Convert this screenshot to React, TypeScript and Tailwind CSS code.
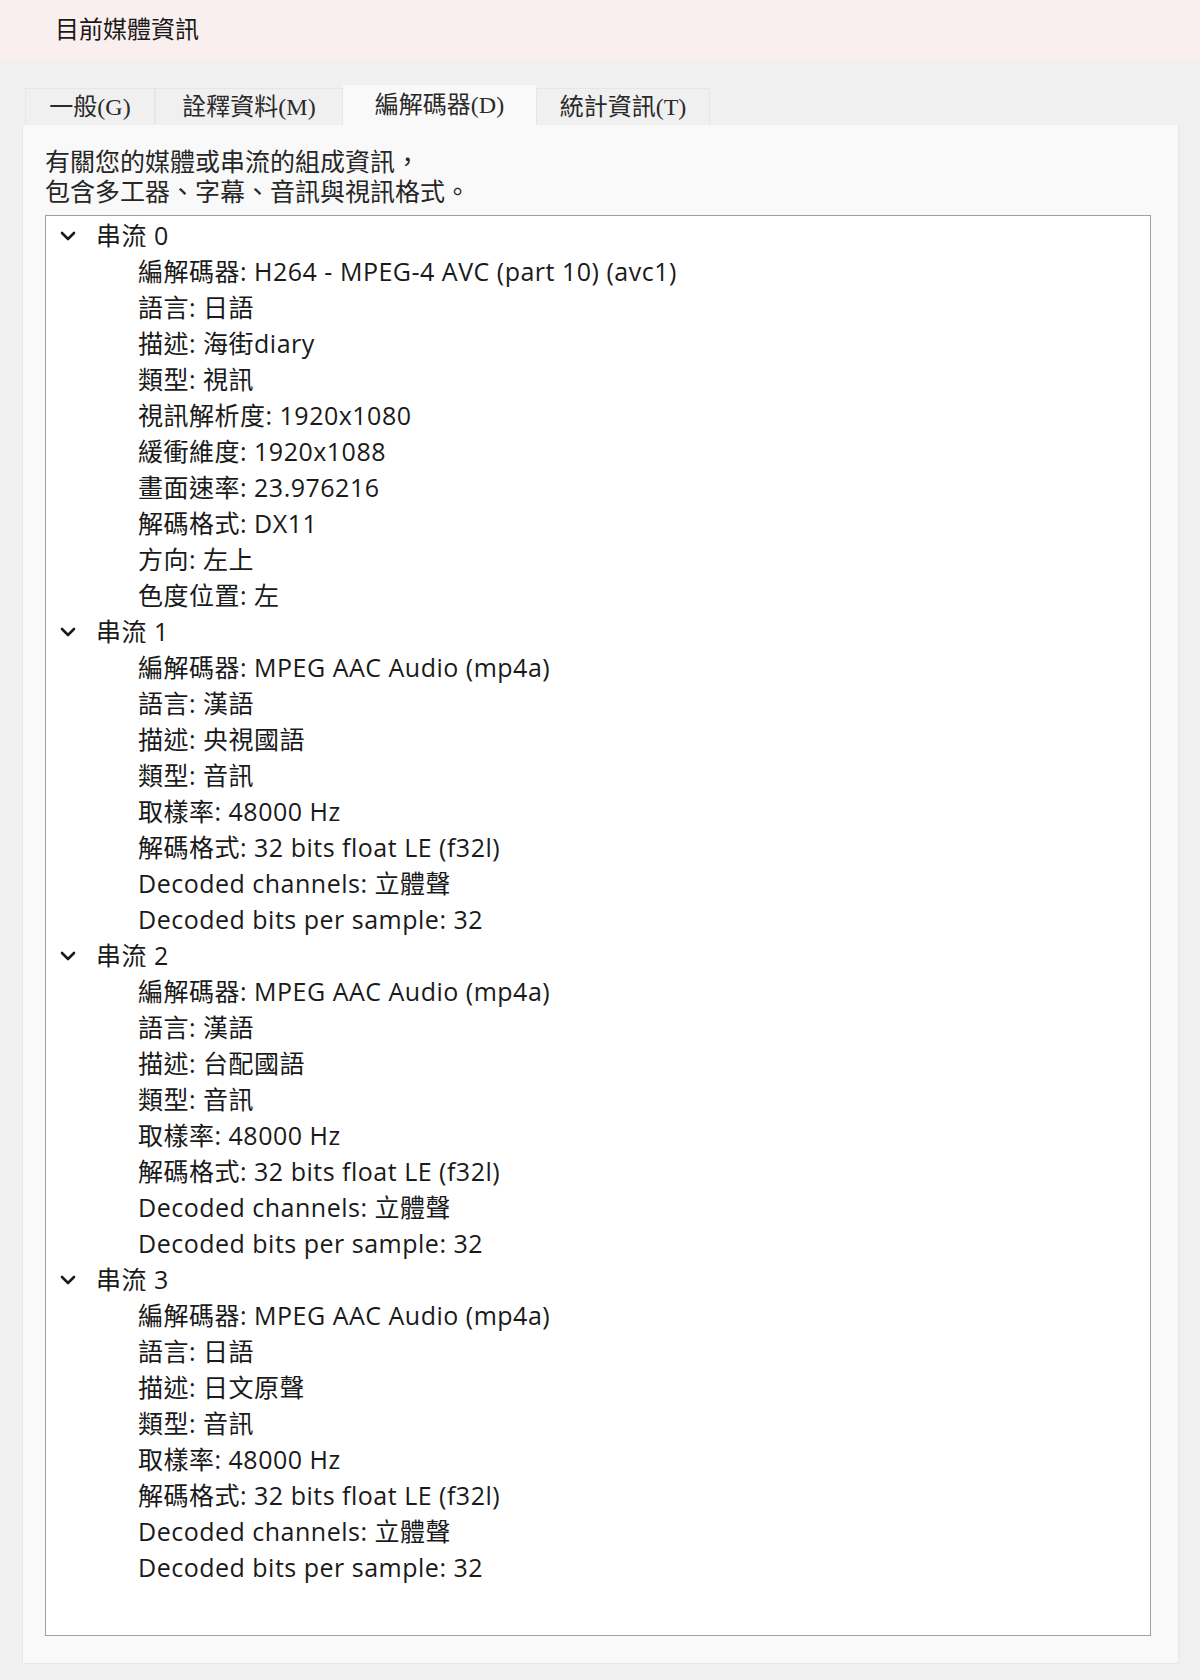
import React from "react";

interface Stream {
  name: string;
  items: string[];
}

const streams: Stream[] = [
  {
    name: "串流 0",
    items: [
      "編解碼器: H264 - MPEG-4 AVC (part 10) (avc1)",
      "語言: 日語",
      "描述: 海街diary",
      "類型: 視訊",
      "視訊解析度: 1920x1080",
      "緩衝維度: 1920x1088",
      "畫面速率: 23.976216",
      "解碼格式: DX11",
      "方向: 左上",
      "色度位置: 左",
    ],
  },
  {
    name: "串流 1",
    items: [
      "編解碼器: MPEG AAC Audio (mp4a)",
      "語言: 漢語",
      "描述: 央視國語",
      "類型: 音訊",
      "取樣率: 48000 Hz",
      "解碼格式: 32 bits float LE (f32l)",
      "Decoded channels: 立體聲",
      "Decoded bits per sample: 32",
    ],
  },
  {
    name: "串流 2",
    items: [
      "編解碼器: MPEG AAC Audio (mp4a)",
      "語言: 漢語",
      "描述: 台配國語",
      "類型: 音訊",
      "取樣率: 48000 Hz",
      "解碼格式: 32 bits float LE (f32l)",
      "Decoded channels: 立體聲",
      "Decoded bits per sample: 32",
    ],
  },
  {
    name: "串流 3",
    items: [
      "編解碼器: MPEG AAC Audio (mp4a)",
      "語言: 日語",
      "描述: 日文原聲",
      "類型: 音訊",
      "取樣率: 48000 Hz",
      "解碼格式: 32 bits float LE (f32l)",
      "Decoded channels: 立體聲",
      "Decoded bits per sample: 32",
    ],
  },
];

const tabs = [
  { label: "一般(G)", width: "w-[130px]" },
  { label: "詮釋資料(M)", width: "w-[188px]" },
  { label: "編解碼器(D)", width: "w-[193px]", active: true },
  { label: "統計資訊(T)", width: "w-[174px]" },
];

function Chevron() {
  return (
    <svg width="16" height="10" viewBox="0 0 16 10" className="ml-[14px]">
      <polyline
        points="2,2 8,8 14,2"
        fill="none"
        stroke="#1a1a1a"
        strokeWidth="2.6"
        strokeLinecap="round"
        strokeLinejoin="round"
      />
    </svg>
  );
}

export default function App() {
  return (
    <div className="min-h-[1680px] bg-[#f0f0f0] font-['Open_Sans','Noto_Sans_CJK_TC',sans-serif] text-[#1a1a1a]">
      {/* Title band */}
      <div className="flex h-[61px] items-center bg-[#faefef] pb-[4px] pl-[55px] text-[24px]">
        目前媒體資訊
      </div>

      {/* Tabs */}
      <div className="mt-[24px] flex items-end pl-[25px] font-['Liberation_Serif','Noto_Sans_CJK_TC',serif] text-[24px] text-[#2a2a2a]">
        {tabs.map((tab) =>
          tab.active ? (
            <div
              key={tab.label}
              className={`${tab.width} flex h-[40px] items-center justify-center bg-[#f9f9f9]`}
            >
              {tab.label}
            </div>
          ) : (
            <div
              key={tab.label}
              className={`${tab.width} flex h-[37px] items-center justify-center border border-b-0 border-[#e6e6e6] bg-[#f0f0f0]`}
            >
              {tab.label}
            </div>
          )
        )}
      </div>

      {/* Panel */}
      <div className="mx-[22px] h-[1539px] w-[1157px] border border-t-0 border-[#e8e8e8] bg-[#f9f9f9] pl-[22px] pt-[21px]">
        <div className="text-[25px] leading-[30px] text-[#262626]">
          <div>有關您的媒體或串流的組成資訊，</div>
          <div>包含多工器、字幕、音訊與視訊格式。</div>
        </div>

        <div className="mt-[9px] h-[1421px] w-[1106px] border border-[#a0a0a0] bg-white pt-[2px] text-[25px] tracking-[0.5px]">
          {streams.map((s) => (
            <div key={s.name}>
              <div className="flex h-[36px] items-center">
                <Chevron />
                <span className="ml-[20px]">{s.name}</span>
              </div>
              {s.items.map((item, i) => (
                <div key={i} className="flex h-[36px] items-center pl-[92px]">
                  {item}
                </div>
              ))}
            </div>
          ))}
        </div>
      </div>
    </div>
  );
}
